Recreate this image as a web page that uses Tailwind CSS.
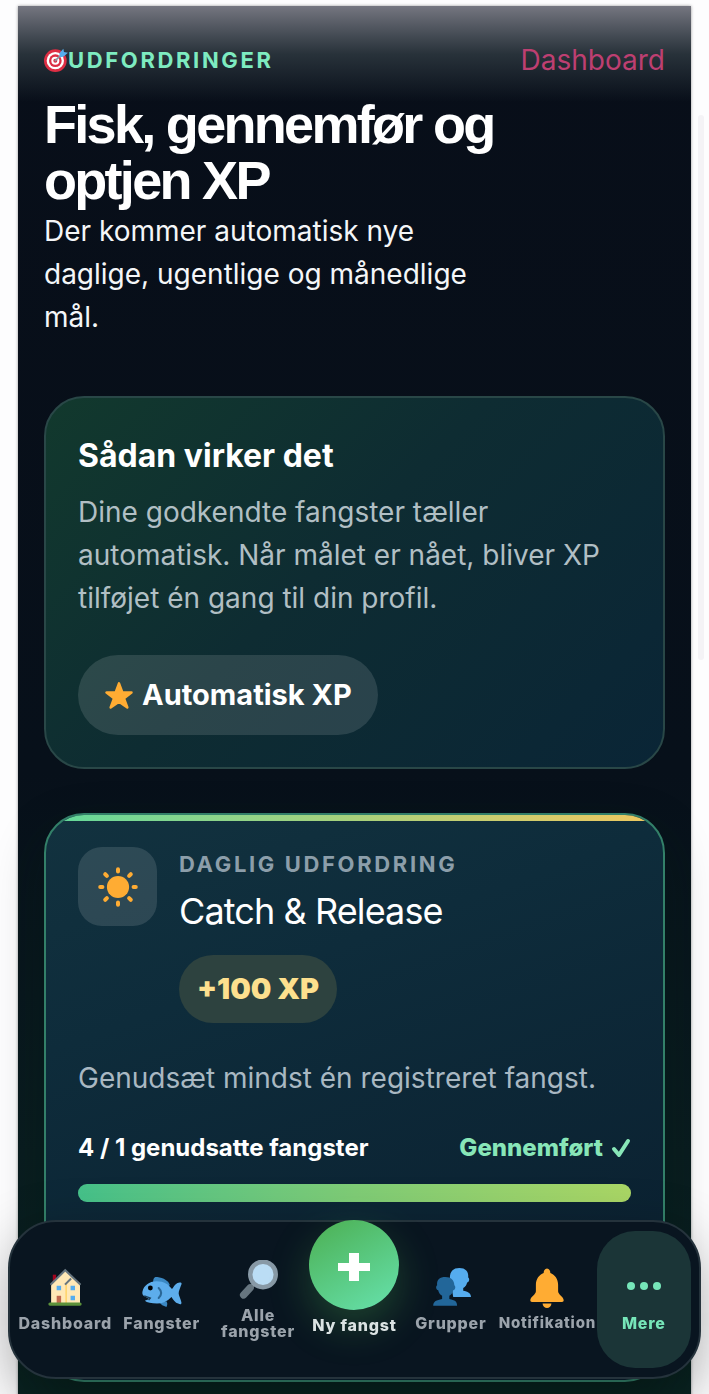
<!DOCTYPE html>
<html lang="da">
  <head>
    <meta charset="utf-8" />
    <meta name="viewport" content="width=device-width, initial-scale=1" />
    <title>Udfordringer</title>
    <script src="https://cdn.jsdelivr.net/npm/@tailwindcss/browser@4"></script>
  </head>
  <body class="bg-[#fdfdfe] font-['Inter','Liberation_Sans',sans-serif] text-white">
    <div class="min-h-screen px-[18px] pt-[6px]">
      <main class="relative min-h-screen bg-linear-to-b from-[#080e19] via-[#07101a] via-55% to-[#0a2422] px-[26px] pb-[13px] shadow-[0_0_3px_rgba(0,0,0,0.4)]">
        <div class="absolute inset-x-0 top-0 h-24 bg-linear-to-b from-[#757680] via-[#28323a] via-50% to-transparent"></div>

        <header class="relative pt-8">
          <div class="flex items-center justify-between">
            <p class="flex items-center text-[22px] leading-11 font-bold tracking-[0.12em] text-[#7eebc0]">
              <svg class="size-6" viewBox="0 0 36 36" aria-hidden="true">
                <circle cx="17" cy="19" r="17" fill="#dd2e44" />
                <circle cx="17" cy="19" r="13" fill="#fff" />
                <circle cx="17" cy="19" r="9.500" fill="#dd2e44" />
                <circle cx="17" cy="19" r="6" fill="#fff" />
                <circle cx="17" cy="19" r="3" fill="#dd2e44" />
                <path d="M17 19 27 9" stroke="#8899a6" stroke-width="2.500" stroke-linecap="round" />
                <path d="M23 8 29 1l1 5 6 1-7 6-5 1z" fill="#55acee" />
              </svg>
              UDFORDRINGER
            </p>
            <a href="#" class="text-[28px] leading-11 text-[#bd3f71]">Dashboard</a>
          </div>
          <h1 class="mt-[14px] max-w-[480px] font-['Liberation_Sans',sans-serif] text-[54px] leading-14 font-bold tracking-tighter">Fisk, gennemfør og optjen XP</h1>
          <p class="mt-[2px] max-w-[430px] text-[28px] leading-[43px] text-[#f4f6f8]">Der kommer automatisk nye daglige, ugentlige og månedlige mål.</p>
        </header>

        <section class="mt-[57px] rounded-[40px] border-2 border-[#294747] bg-linear-135 from-[#12392d] via-[#0e2c32] via-45% to-[#0a2536] p-8">
          <h2 class="mt-[6px] text-[32px] leading-10 font-bold">Sådan virker det</h2>
          <p class="mt-[15px] text-[28px] leading-[43px] text-[#b1bfc4]">Dine godkendte fangster tæller automatisk. Når målet er nået, bliver XP tilføjet én gang til din profil.</p>
          <span class="mt-[35px] inline-flex h-20 items-center gap-2 rounded-full bg-white/12 px-[26px] text-[29px] font-bold">
            <svg class="size-[30px]" viewBox="0 0 36 36" aria-hidden="true">
              <path d="m18 4 4 11h11l-9 7 4 11-10-7-10 7 4-11-9-7h11z" fill="#ffac33" stroke="#ffac33" stroke-width="3" stroke-linejoin="round" />
            </svg>
            Automatisk XP
          </span>
        </section>

        <section class="relative mt-11 min-h-[569px] overflow-hidden rounded-[40px] border-2 border-[#338069] bg-linear-160 from-[#12323f] via-[#0e2c3b] via-30% to-[#0a1e2e] p-8 shadow-[0_20px_50px_rgba(0,30,20,0.3)]">
          <div class="absolute inset-x-0 top-0 h-[6px] bg-linear-to-r from-[#5fd99b] via-[#a8d17b] to-[#efc75e]"></div>
          <div class="flex gap-[22px]">
            <div class="flex size-[79px] shrink-0 items-center justify-center rounded-3xl bg-white/12">
              <svg class="size-10" viewBox="0 0 36 36" fill="none" stroke="#ffac33" stroke-width="3.600" stroke-linecap="round" aria-hidden="true">
                <circle cx="18" cy="18" r="10" fill="#ffac33" stroke="none" />
                <path d="M18 2v2M18 32v2M2 18h2M32 18h2M6.500 6.500l1.500 1.500M28 28l1.500 1.500M6.500 29.500 8 28M28 8l1.500-1.500" />
              </svg>
            </div>
            <div>
              <p class="mt-[3px] text-[22px] leading-7 font-bold tracking-[0.12em] text-[#8c9eaa]">DAGLIG UDFORDRING</p>
              <h2 class="mt-[11px] text-[36px] leading-11 tracking-tight">Catch &amp; Release</h2>
              <span class="mt-[22px] inline-flex h-[68px] items-center rounded-full bg-[#2d423f] px-[18px] text-[29px] font-black text-[#fde08e]">+100 XP</span>
            </div>
          </div>
          <p class="mt-[34px] text-[28px] leading-[43px] text-[#a9b8c2]">Genudsæt mindst én registreret fangst.</p>
          <label for="catches" class="mt-[30px] flex items-center justify-between text-[24px] leading-9 font-bold">
            4 / 1 genudsatte fangster
            <span class="flex items-center gap-2 font-extrabold text-[#88e6b8]">
              Gennemført
              <svg class="size-5" viewBox="0 0 20 20" fill="none" stroke="currentColor" stroke-width="4" stroke-linecap="round" stroke-linejoin="round" aria-hidden="true">
                <path d="m3 11 5 6 9-14" />
              </svg>
            </span>
          </label>
          <div id="catches" role="progressbar" aria-valuenow="100" class="mt-[18px] h-[18px] rounded-full bg-white/10">
            <div class="h-full rounded-full bg-linear-to-r from-[#45c28a] via-[#7fcd76] to-[#aad765]" style="width: 100%"></div>
          </div>
        </section>
      </main>
    </div>

    <!-- scroll thumb -->
    <div class="fixed top-[115px] right-[5px] h-[545px] w-[6px] rounded-full bg-[#f4f3f6]"></div>

    <nav class="fixed inset-x-2 bottom-[15px] rounded-[48px] border-2 border-[#25333c] bg-[#091520] px-2 py-[9px] shadow-[0_20px_60px_rgba(0,0,0,0.3)]">
      <div class="grid grid-cols-7 gap-[2px] text-center text-[16px] leading-4 font-extrabold tracking-wider text-[#9ba3ab]">
        <a href="#" class="flex h-[137px] min-w-0 flex-col items-center justify-center gap-[7px]">
          <svg class="size-10 shrink-0" viewBox="0 0 36 36" aria-hidden="true">
            <path d="M7 6h3v8H7z" fill="#a0041e" />
            <path d="M5.500 14 18.200 2 31.500 14v18h-26z" fill="#ffe8b6" />
            <path d="M18.500 15v17h1V14z" fill="#ffcc4d" />
            <path d="m5 15 13.200-13L32 15" fill="none" stroke="#66757f" stroke-width="1.800" />
            <path d="m18 15 5.500-5.500" fill="none" stroke="#66757f" stroke-width="1.800" />
            <path d="M10.500 16h4v4h-4zM23 16h4v4h-4zM23 25h4v4h-4z" fill="#55acee" />
            <path d="M10.500 25h4v7h-4z" fill="#c1694f" />
            <rect x="3" y="31" width="30" height="3" rx="1.500" fill="#5c913b" />
          </svg>
          <span>Dashboard</span>
        </a>
        <a href="#" class="flex h-[137px] min-w-0 flex-col items-center justify-center gap-[7px]">
          <svg class="size-10 shrink-0" viewBox="0 0 36 36" aria-hidden="true">
            <path d="M10 14c0-3 0-5 2-6 5 0 11 2 13 7l-2 4z" fill="#3b88c3" />
            <path d="M16 31c1 2 3 3 6 4 1-2 1-3 0-5z" fill="#3b88c3" />
            <path d="M.500 21c1-5 6-9 12.500-9 7 0 11 3 14 7 2-3 4-6 7-6 2 0 2 1 1 3-1 3-2 5-2 7s2 5 2.500 8c0 2-1 2-3 1-3-1-4-3-6-6-4 4-8 6-13 6-5 0-9-1-11-2.500l4-1.500-5-3c-1-1-1.500-2-1-4z" fill="#5dadec" />
            <path d="M15 18c3 3 3 6 0 9" fill="none" stroke="#2a6797" stroke-width="1.800" stroke-linecap="round" />
            <path d="m2 25 5.500 2-1.500 2" fill="none" stroke="#1b3c56" stroke-width="1.200" />
            <circle cx="7.500" cy="18" r="2.200" fill="#000" />
          </svg>
          <span>Fangster</span>
        </a>
        <a href="#" class="flex h-[137px] min-w-0 flex-col items-center justify-center gap-[7px]">
          <svg class="size-10 shrink-0" viewBox="0 0 36 36" aria-hidden="true">
            <path d="m15 21-5 5" stroke="#9aaab4" stroke-width="3" />
            <path d="m11 25-6 6.500" stroke="#66757f" stroke-width="6.500" stroke-linecap="round" />
            <circle cx="22.500" cy="13" r="11.500" fill="#bbddf5" stroke="#8899a6" stroke-width="4" />
          </svg>
          <span>Alle fangster</span>
        </a>
        <a href="#" class="flex h-[137px] min-w-0 flex-col items-center justify-center gap-[7px] text-[#dbe3e3]">
          <span class="-mt-[46px] flex size-[90px] shrink-0 items-center justify-center rounded-full bg-linear-150 from-[#4caf50] to-[#67e2ad] shadow-[0_16px_40px_rgba(76,175,80,0.3)]">
            <svg class="mt-1 size-8" viewBox="0 0 32 32" fill="#fff" aria-hidden="true">
              <path d="M11 2h10v10h11v8H21v10H11V20H0v-8h11z" />
            </svg>
          </span>
          <span class="whitespace-nowrap">Ny fangst</span>
        </a>
        <a href="#" class="flex h-[137px] min-w-0 flex-col items-center justify-center gap-[7px]">
          <svg class="size-10 shrink-0" viewBox="0 0 36 36" aria-hidden="true">
            <path d="M36 26c0-3-3-5-7-5.500V18c2-1 3-3 3.500-5 2-.5 2.500-3.500 1-4.500C34 3 31 0 25.500 0S17 3 17 9l3 17z" fill="#55acee" />
            <path d="M2 34c0-4 3-5 8-6v-3c-2-1-3-3-3.500-5-2-.5-2.500-3.500-1-4.500C5 10 8 8 13 8s8 3 8 7.500c1.500 1 1 4-1 4.500-.5 2-1.500 4-3.500 5v3c5 1 7 2 7 6z" fill="#226699" />
          </svg>
          <span>Grupper</span>
        </a>
        <a href="#" class="flex h-[137px] min-w-0 flex-col items-center justify-center gap-[7px]">
          <svg class="size-10 shrink-0" viewBox="0 0 36 36" fill="#ffac33" aria-hidden="true">
            <path d="M14 32h8c0 2.500-2 4-4 4s-4-1.500-4-4z" />
            <path d="M28 15c0-5-3-9-7-10.500C21 2.500 20 .5 18 .5s-3 2-3 4C11 6 8 10 8 15v6c0 3-5 5-5 8 0 1 .5 1.500 1.500 1.500h27c1 0 1.500-.5 1.500-1.500 0-3-5-5-5-8z" />
          </svg>
          <span class="text-[15px] whitespace-nowrap">Notifikation</span>
        </a>
        <a href="#" class="flex h-[137px] min-w-0 flex-col items-center justify-center gap-[7px] rounded-[38px] bg-[#1b3537] text-[#76e6b9]" aria-current="page">
          <svg class="size-10 shrink-0" viewBox="0 0 40 40" fill="currentColor" aria-hidden="true">
            <circle cx="7" cy="18" r="4" />
            <circle cx="20" cy="18" r="4" />
            <circle cx="33" cy="18" r="4" />
          </svg>
          <span>Mere</span>
        </a>
      </div>
    </nav>
  </body>
</html>
